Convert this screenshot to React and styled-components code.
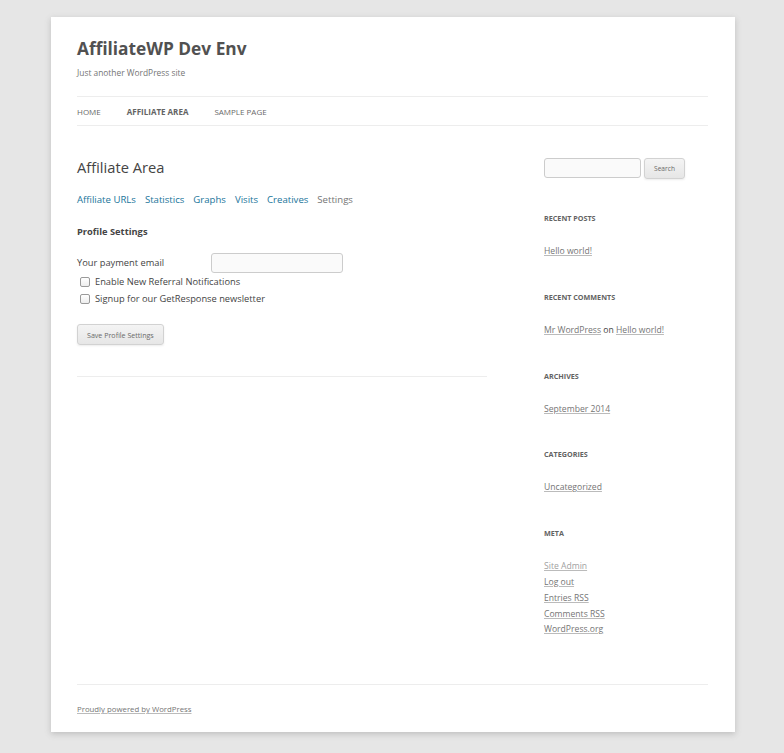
import React from 'react'
import styled, { createGlobalStyle } from 'styled-components'

const Global = createGlobalStyle`
  html { background: #e6e6e6; }
  body {
    margin: 0;
    padding: 17px 0 22px;
    font-family: "Open Sans", "Liberation Sans", sans-serif;
    color: #444;
  }
`

const Page = styled.div`
  width: 684px;
  margin: 0 0 0 51px;
  background: #fff;
  box-shadow: 0 2px 6px rgba(100, 100, 100, 0.3);
  padding: 0 27px 0 26px;
  box-sizing: border-box;
`

const Header = styled.header`
  padding-top: 20px;
`

const SiteTitle = styled.h1`
  margin: 0;
  font-size: 17.3px;
  line-height: 24px;
  font-weight: 700;
  color: #515151;
`

const Tagline = styled.h2`
  margin: 5px 0 0;
  font-size: 8.4px;
  line-height: 14px;
  font-weight: 400;
  color: #757575;
`

const Nav = styled.nav`
  margin-top: 16px;
  border-top: 1px solid #ededed;
  border-bottom: 1px solid #ededed;
  height: 28px;
  display: flex;
  align-items: center;
  gap: 26px;
`

const NavItem = styled.a`
  font-size: 8px;
  text-transform: uppercase;
  text-decoration: none;
  color: ${p => (p.$current ? '#636363' : '#6a6a6a')};
  font-weight: ${p => (p.$current ? 700 : 400)};
`

const Body = styled.div`
  display: flex;
  justify-content: space-between;
  padding-top: 31px;
`

const Main = styled.main`
  width: 410px;
`

const EntryTitle = styled.h1`
  margin: 0;
  font-size: 14.7px;
  line-height: 20px;
  font-weight: 400;
  color: #444;
`

const Tabs = styled.ul`
  list-style: none;
  margin: 16px 0 0;
  padding: 0;
  display: flex;
  gap: 9px;
`

const Tab = styled.li`
  font-size: 9.6px;
  line-height: 14px;
  color: ${p => (p.$active ? '#757575' : '#21759b')};
`

const SectionTitle = styled.h4`
  margin: 18px 0 0;
  font-size: 9.3px;
  line-height: 14px;
  font-weight: 700;
  color: #444;
`

const FieldRow = styled.div`
  display: flex;
  align-items: center;
  margin-top: 14px;
`

const Label = styled.label`
  width: 134px;
  font-size: 9.3px;
  line-height: 14px;
`

const TextInput = styled.input`
  width: 132px;
  height: 20px;
  box-sizing: border-box;
  border: 1px solid #ccc;
  border-radius: 3px;
  background: #fafafa;
  padding: 0 4px;
`

const CheckRow = styled.label`
  display: flex;
  align-items: center;
  gap: 5px;
  font-size: 9.3px;
  line-height: 17px;
  padding-left: 3px;
`

const Box = styled.span`
  width: 8px;
  height: 8px;
  border: 1px solid #9a9a9a;
  border-radius: 2px;
  background: linear-gradient(#fff, #ededed);
`

const Button = styled.button`
  margin-top: 17px;
  height: 21px;
  padding: 0 9px;
  font-family: inherit;
  font-size: 7.1px;
  color: #6a6a6a;
  border: 1px solid #d2d2d2;
  border-radius: 3px;
  background: linear-gradient(#f4f4f4, #e6e6e6);
  box-shadow: 0 1px 2px rgba(64, 64, 64, 0.1);
`

const Divider = styled.hr`
  margin: 31px 0 0;
  border: 0;
  border-top: 1px solid #ededed;
`

const Sidebar = styled.aside`
  width: 164px;
  padding-top: 1px;
`

const SearchForm = styled.form`
  display: flex;
  gap: 3px;
`

const SearchInput = styled.input`
  width: 97px;
  height: 20px;
  box-sizing: border-box;
  border: 1px solid #ccc;
  border-radius: 3px;
  background: #fafafa;
`

const SearchButton = styled.button`
  width: 41px;
  height: 21px;
  font-family: inherit;
  font-size: 6.6px;
  color: #6a6a6a;
  padding: 0;
  border: 1px solid #d2d2d2;
  border-radius: 3px;
  background: linear-gradient(#f4f4f4, #e6e6e6);
  box-shadow: 0 1px 2px rgba(64, 64, 64, 0.1);
`

const Widget = styled.section`
  margin-top: ${p => (p.$first ? '33px' : '31px')};
`

const WidgetTitle = styled.h3`
  margin: 0;
  font-size: 7.2px;
  line-height: 12px;
  font-weight: 700;
  text-transform: uppercase;
  color: #636363;
`

const WidgetList = styled.ul`
  list-style: none;
  margin: 20px 0 0;
  padding: 0;
`

const WidgetItem = styled.li`
  font-size: 8.6px;
  line-height: 15.8px;
  color: #444;
`

const Link = styled.a`
  color: ${p => (p.$light ? '#9f9f9f' : '#757575')};
  text-decoration: underline;
  text-decoration-color: #bbb;
`

const Footer = styled.footer`
  margin-top: 46px;
  border-top: 1px solid #ededed;
  padding: 16px 0 14px;
  font-size: 7.8px;
  line-height: 17px;
`

const widgets = [
  { title: 'Recent Posts', items: [[<Link key="a">Hello world!</Link>]] },
  {
    title: 'Recent Comments',
    items: [[<Link key="a">Mr WordPress</Link>, ' on ', <Link key="b">Hello world!</Link>]],
  },
  { title: 'Archives', items: [[<Link key="a">September 2014</Link>]] },
  { title: 'Categories', items: [[<Link key="a">Uncategorized</Link>]] },
  {
    title: 'Meta',
    items: [
      [<Link key="a" $light>Site Admin</Link>],
      [<Link key="a">Log out</Link>],
      [<Link key="a">Entries RSS</Link>],
      [<Link key="a">Comments RSS</Link>],
      [<Link key="a">WordPress.org</Link>],
    ],
  },
]

export default function App() {
  return (
    <>
      <Global />
      <Page>
        <Header>
          <SiteTitle>AffiliateWP Dev Env</SiteTitle>
          <Tagline>Just another WordPress site</Tagline>
          <Nav>
            <NavItem>Home</NavItem>
            <NavItem $current>Affiliate Area</NavItem>
            <NavItem>Sample Page</NavItem>
          </Nav>
        </Header>
        <Body>
          <Main>
            <EntryTitle>Affiliate Area</EntryTitle>
            <Tabs>
              <Tab>Affiliate URLs</Tab>
              <Tab>Statistics</Tab>
              <Tab>Graphs</Tab>
              <Tab>Visits</Tab>
              <Tab>Creatives</Tab>
              <Tab $active>Settings</Tab>
            </Tabs>
            <SectionTitle>Profile Settings</SectionTitle>
            <FieldRow>
              <Label>Your payment email</Label>
              <TextInput type="text" />
            </FieldRow>
            <div>
              <CheckRow><Box />Enable New Referral Notifications</CheckRow>
              <CheckRow><Box />Signup for our GetResponse newsletter</CheckRow>
            </div>
            <Button>Save Profile Settings</Button>
            <Divider />
          </Main>
          <Sidebar>
            <SearchForm onSubmit={e => e.preventDefault()}>
              <SearchInput type="text" />
              <SearchButton>Search</SearchButton>
            </SearchForm>
            {widgets.map((w, i) => (
              <Widget key={w.title} $first={i === 0}>
                <WidgetTitle>{w.title}</WidgetTitle>
                <WidgetList>
                  {w.items.map((it, j) => (
                    <WidgetItem key={j}>{it}</WidgetItem>
                  ))}
                </WidgetList>
              </Widget>
            ))}
          </Sidebar>
        </Body>
        <Footer>
          <Link>Proudly powered by WordPress</Link>
        </Footer>
      </Page>
    </>
  )
}
